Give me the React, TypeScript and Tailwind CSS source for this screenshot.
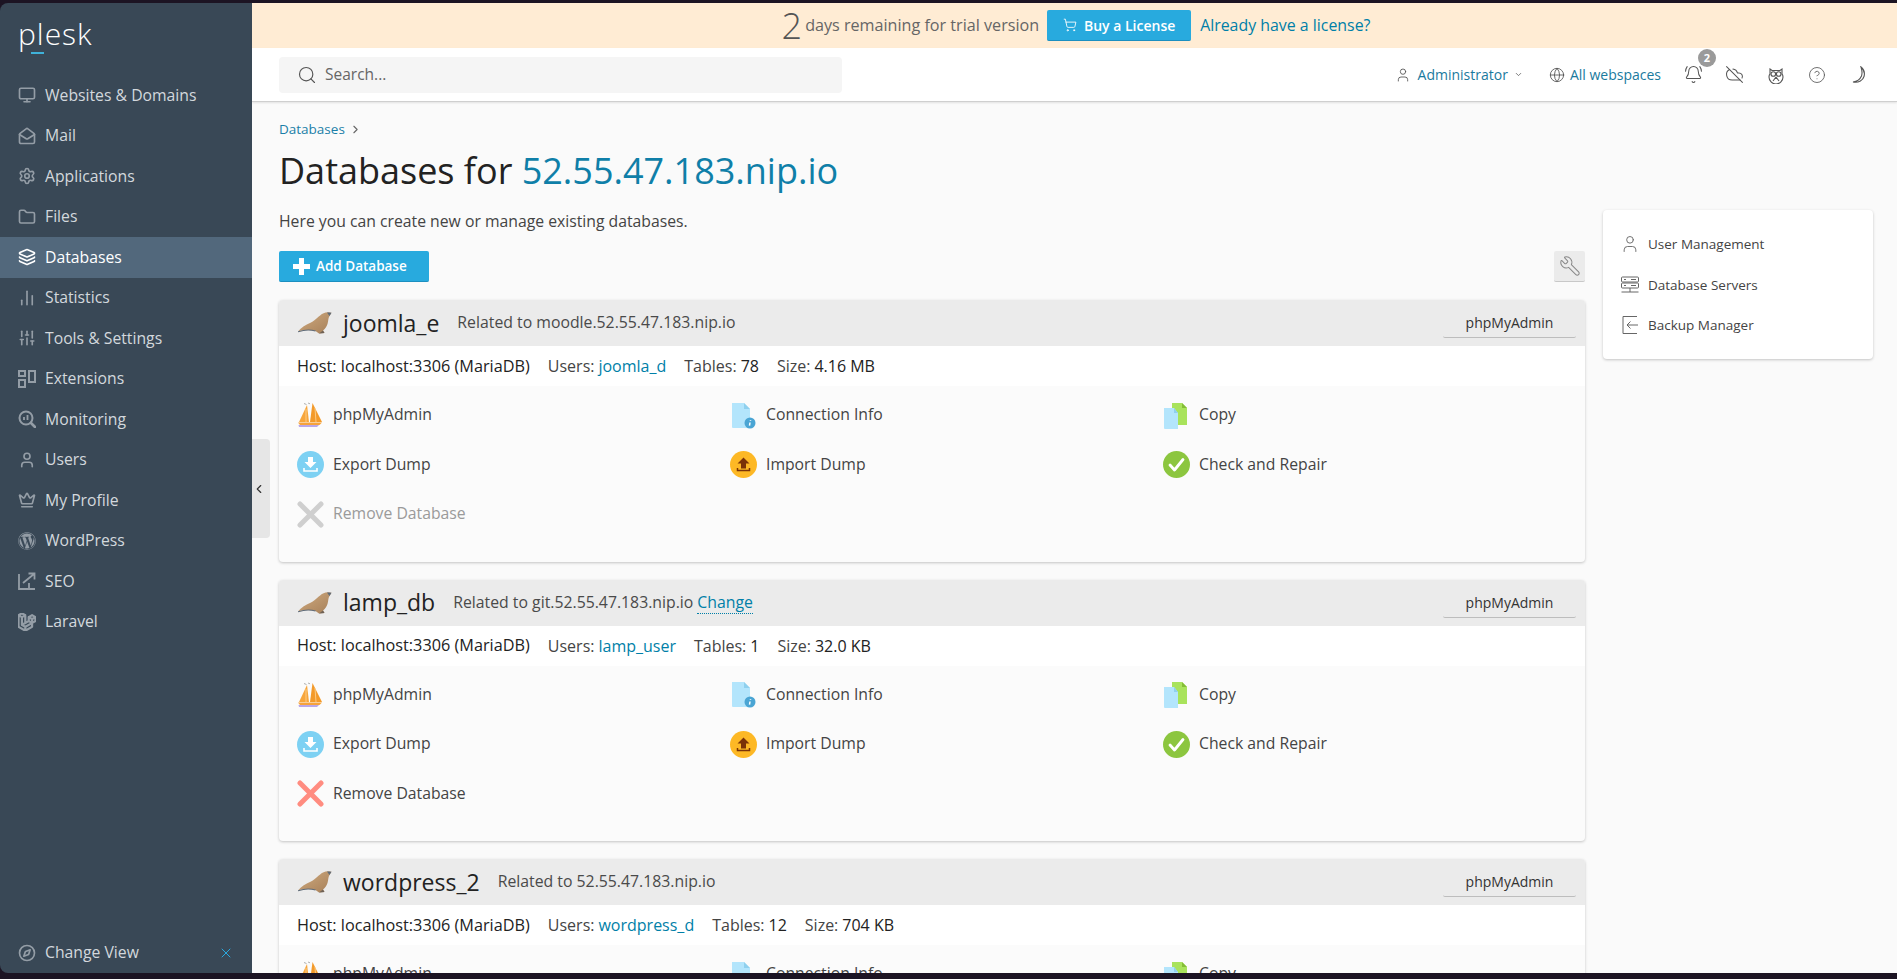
import React from "react";
import {
  Monitor, MailOpen, Settings, Folder, Layers, ChartNoAxesColumn, SlidersVertical, User, Crown,
  Compass, X, ChevronLeft, ChevronRight, ChevronDown, Search, ShoppingCart,
  Globe, BellRing, CloudOff, CircleHelp, Wrench,
} from "lucide-react";
import { FaWordpress } from "react-icons/fa";
import { SiLaravel } from "react-icons/si";

type IconProps = { className?: string; strokeWidth?: number };

const ExtensionsIcon = ({ className }: IconProps) => (
  <svg viewBox="0 0 18 18" className={className} fill="none" stroke="currentColor" strokeWidth="2">
    <rect x="1" y="1" width="6" height="5" />
    <rect x="1" y="10" width="6" height="7" />
    <rect x="11" y="1" width="6" height="11" />
  </svg>
);

const MonitoringIcon = ({ className }: IconProps) => (
  <svg viewBox="0 0 18 18" className={className} fill="none" stroke="currentColor" strokeWidth="2">
    <circle cx="8" cy="8" r="6.500" />
    <path d="M13 13l4 4" strokeWidth="2.600" strokeLinecap="round" />
    <path d="M6 10V7M9.500 10V5" strokeWidth="1.800" />
  </svg>
);

const SeoIcon = ({ className }: IconProps) => (
  <svg viewBox="0 0 18 18" className={className} fill="none" stroke="currentColor" strokeWidth="1.800">
    <path d="M1 2v15h16" />
    <path d="M5 11 16 2M10.500 1.500H16.500V7.500" />
    <path d="M11 16v-5" />
  </svg>
);

const menu = [
  { label: "Websites & Domains", Icon: Monitor },
  { label: "Mail", Icon: MailOpen },
  { label: "Applications", Icon: Settings },
  { label: "Files", Icon: Folder },
  { label: "Databases", Icon: Layers, active: true },
  { label: "Statistics", Icon: ChartNoAxesColumn },
  { label: "Tools & Settings", Icon: SlidersVertical },
  { label: "Extensions", Icon: ExtensionsIcon },
  { label: "Monitoring", Icon: MonitoringIcon },
  { label: "Users", Icon: User },
  { label: "My Profile", Icon: Crown },
  { label: "WordPress", Icon: FaWordpress },
  { label: "SEO", Icon: SeoIcon },
  { label: "Laravel", Icon: SiLaravel },
];

const Seal = () => (
  <svg viewBox="0 0 34 22" className="w-[34px] h-[22px] shrink-0">
    <defs>
      <linearGradient id="sealfill" x1="0" y1="0" x2="1" y2="1">
        <stop offset="0" stopColor="#d0ab80" />
        <stop offset="1" stopColor="#a67f58" />
      </linearGradient>
    </defs>
    <path
      d="M0 19.500C3 15.500 8 12.500 13 10.500 18 8 21 3.500 25 1.500 28 0 31 0 33.500 .8L31.500 4C30 6 30.500 9 29.500 12 28.500 15 27 17 25 18.500L26.500 21 21 21.500 17.500 19C12 17.500 6 17.500 0 19.500z"
      fill="url(#sealfill)"
    />
    <path d="M0 19.800c6-2 12-2.400 17.500-.8" fill="none" stroke="#5f6b78" strokeWidth="1.200" />
    <path d="M29 .6c1.500.1 2.800 0 4.500.2l-2 3.200c-.8-1.200-1.800-2.300-2.500-3.400z" fill="#5f6b78" />
    <path d="M21 21.500l5.500-.5-1.500-2.500" fill="#6f6257" />
  </svg>
);

const Sails = () => (
  <svg viewBox="0 0 26 26" className="w-[26px] h-[26px]">
    <path d="M10 3 2 20h10z" fill="#f7a63c" />
    <path d="M15.500 1 13 20h12z" fill="#f39a2a" />
    <path d="M9 7v13M18 6l1 14" stroke="#fcd08e" strokeWidth=".9" />
    <path d="M1 20.500h24l-2.500 2.500H3z" fill="#f6a33b" />
    <path d="M1.500 23h20.500l-2 2H2z" fill="#b9a7e6" />
    <path d="M7 1.500l2.500 1M11 1l2 .8" stroke="#9a9a9a" strokeWidth=".8" />
  </svg>
);

const ExportIcon = () => (
  <svg viewBox="0 0 27 27" className="w-[27px] h-[27px]">
    <circle cx="13.500" cy="13.500" r="13.500" fill="#7dd1f3" />
    <path d="M11 6h5v5h3.500l-6 6-6-6H11z" fill="#fff" />
    <path d="M7 17v3h13v-3" fill="none" stroke="#fff" strokeWidth="1.600" />
  </svg>
);

const ImportIcon = () => (
  <svg viewBox="0 0 27 27" className="w-[27px] h-[27px]">
    <circle cx="13.500" cy="13.500" r="13.500" fill="#fdb825" />
    <path d="M13.500 6.500l6 6H16v5h-5v-5H7.500z" fill="#7a3207" />
    <path d="M7.500 17v2.500h12V17" fill="none" stroke="#7a3207" strokeWidth="1.500" />
  </svg>
);

const CheckIcon = () => (
  <svg viewBox="0 0 27 27" className="w-[27px] h-[27px]">
    <circle cx="13.500" cy="13.500" r="13.500" fill="#8cc63f" />
    <path d="M7 14l4.500 5L20 8.500" fill="none" stroke="#fff" strokeWidth="2.800" strokeLinecap="round" strokeLinejoin="round" />
  </svg>
);

const InfoDoc = () => (
  <svg viewBox="0 0 27 27" className="w-[27px] h-[27px]">
    <path d="M2 1h12l6 6v19H3a1 1 0 0 1-1-1z" fill="#b3e5fc" />
    <path d="M14 1l6 6h-6z" fill="#8fd0ee" />
    <circle cx="20" cy="21" r="5.500" fill="#4aa5d4" />
    <path d="M20.500 18v.8M20 20.500l-.5 3.200" stroke="#fff" strokeWidth="1.500" />
  </svg>
);

const CopyDoc = () => (
  <svg viewBox="0 0 27 27" className="w-[27px] h-[27px]">
    <path d="M9 1h10l5 5v17H9z" fill="#a9e35b" />
    <path d="M19 1l5 5h-5z" fill="#84bd36" />
    <path d="M1 6h10l4 5v16H2a1 1 0 0 1-1-1z" fill="#b3e5fc" />
    <path d="M11 6l4 5h-4z" fill="#8fd0ee" />
  </svg>
);

const RemoveIcon = ({ disabled }: { disabled?: boolean }) => (
  <svg viewBox="0 0 27 27" className="w-[27px] h-[27px]">
    <path
      d="M3 3l21 21M24 3 3 24"
      stroke={disabled ? "#cfcfcf" : "#ff8c80"}
      strokeWidth="5"
      strokeLinecap="round"
    />
  </svg>
);

const Action = ({ icon, label, muted }: { icon: React.ReactNode; label: string; muted?: boolean }) => (
  <div className="flex items-center h-[27px]">
    <div className="w-[36px] flex items-center shrink-0">{icon}</div>
    <span className={muted ? "text-[#9a9a9a]" : "text-[#444]"}>{label}</span>
  </div>
);

type Db = {
  name: string;
  related: string;
  change?: boolean;
  user: string;
  tables: string;
  size: string;
  disabledRemove?: boolean;
};

const DbCard = ({ db }: { db: Db }) => (
  <div className="rounded-[4px] bg-[#fbfbfb] shadow-[0_1px_3px_rgba(0,0,0,0.22)] overflow-hidden h-[261.500px] shrink-0">
    <div className="h-[46px] bg-[#ebebeb] flex items-center pl-[19px] pr-[9px]">
      <Seal />
      <span className="ml-[11px] text-[23px] text-[#222]">{db.name}</span>
      <span className="ml-[18px] text-[15.800px] text-[#4a4a4a]">
        Related to {db.related}
        {db.change && (
          <a className="ml-[4px] text-[#007fa8] border-b border-dotted border-[#007fa8]">Change</a>
        )}
      </span>
      <button className="ml-auto w-[133px] h-[30px] border-b border-[#bdbdbd] rounded-[2px] text-[14px] text-[#333]">
        phpMyAdmin
      </button>
    </div>
    <div className="h-[40px] bg-white flex items-center pl-[18px] text-[16px] text-[#222]">
      <span className="text-[16.250px] font-medium">Host: localhost:3306 (MariaDB)</span>
      <span className="ml-[18px] text-[#444]">Users:</span>
      <a className="ml-[4px] text-[#007fa8] font-medium">{db.user}</a>
      <span className="ml-[18px] text-[#444]">Tables:</span>
      <span className="ml-[4px] font-medium">{db.tables}</span>
      <span className="ml-[18px] text-[#444]">Size:</span>
      <span className="ml-[4px] font-medium">{db.size}</span>
    </div>
    <div className="grid grid-cols-[433px_433px_1fr] gap-y-[22.500px] pl-[18px] pt-[15.500px] text-[15.750px]">
      <Action icon={<Sails />} label="phpMyAdmin" />
      <Action icon={<InfoDoc />} label="Connection Info" />
      <Action icon={<CopyDoc />} label="Copy" />
      <Action icon={<ExportIcon />} label="Export Dump" />
      <Action icon={<ImportIcon />} label="Import Dump" />
      <Action icon={<CheckIcon />} label="Check and Repair" />
      <Action icon={<RemoveIcon disabled={db.disabledRemove} />} label="Remove Database" muted={db.disabledRemove} />
    </div>
  </div>
);

const dbs: Db[] = [
  { name: "joomla_e", related: "moodle.52.55.47.183.nip.io", user: "joomla_d", tables: "78", size: "4.16 MB", disabledRemove: true },
  { name: "lamp_db", related: "git.52.55.47.183.nip.io", change: true, user: "lamp_user", tables: "1", size: "32.0 KB" },
  { name: "wordpress_2", related: "52.55.47.183.nip.io", user: "wordpress_d", tables: "12", size: "704 KB" },
];

const Sidebar = () => (
  <aside className="w-[252px] shrink-0 bg-[#394856] rounded-l-[8px] flex flex-col">
    <div className="h-[72px] pl-[18px] pt-[11px] relative">
      <span className="block text-[30px] leading-[40px] font-light tracking-[1px] text-white">plesk</span>
      <span className="absolute left-[31px] top-[49px] w-[13px] h-[2px] bg-[#3fb2d9]" />
    </div>
    <nav className="flex flex-col">
      {menu.map(({ label, Icon, active }) => (
        <div
          key={label}
          className={
            active
              ? "h-[40.500px] flex items-center pl-[18px] bg-[#52687c] text-white"
              : "h-[40.500px] flex items-center pl-[18px] text-[#d3d8dd]"
          }
        >
          <Icon className={active ? "w-[18px] h-[18px] text-white" : "w-[18px] h-[18px] text-[#949da6]"} strokeWidth={2.200} />
          <span className="ml-[9px] mt-[1px] text-[15.750px]">{label}</span>
        </div>
      ))}
    </nav>
    <div className="mt-auto h-[40px] flex items-center pl-[18px] pr-[18px] text-[#d3d8dd] text-[15.750px]">
      <Compass className="w-[18px] h-[18px] text-[#949da6]" strokeWidth={2.200} />
      <span className="ml-[9px]">Change View</span>
      <X className="ml-auto w-[16px] h-[16px] text-[#29a9df]" strokeWidth={1.500} />
    </div>
  </aside>
);

const Topbar = () => (
  <>
    <div className="h-[45px] shrink-0 bg-[#ffecd4] flex items-center justify-center pl-[3px] text-[16px]">
      <span className="text-[36px] font-light text-[#555] leading-[45px]">2</span>
      <span className="ml-[3px] text-[16.150px] text-[#666]">days remaining for trial version</span>
      <button className="ml-[8px] h-[31px] w-[144px] bg-[#28aade] border-b border-[#1c8fc0] rounded-[2px] flex items-center justify-center gap-[7px] text-white text-[14px] font-semibold">
        <ShoppingCart className="w-[14px] h-[14px]" strokeWidth={1.500} />
        Buy a License
      </button>
      <a className="ml-[9px] text-[15.900px] text-[#007fa8]">Already have a license?</a>
    </div>
    <header className="h-[54px] shrink-0 bg-white border-b border-[#cfcfcf] shadow-[0_1px_2px_rgba(0,0,0,0.1)] flex items-center pl-[27px] pr-[30px] relative z-10">
      <div className="w-[563px] h-[36px] rounded-[4px] bg-[#f5f5f5] flex items-center pl-[18px] gap-[8px] text-[#666] text-[15.500px]">
        <Search className="w-[20px] h-[20px] text-[#555]" strokeWidth={1.400} />
        Search...
      </div>
      <div className="ml-auto flex items-center text-[14px] font-medium text-[#1a7a9e]">
        <User className="w-[16px] h-[16px] text-[#555]" strokeWidth={1.300} />
        <span className="ml-[7px]">Administrator</span>
        <ChevronDown className="ml-[6px] w-[9px] h-[9px] text-[#555]" />
        <Globe className="ml-[26px] w-[16px] h-[16px] text-[#555]" strokeWidth={1.300} />
        <span className="ml-[5px]">All webspaces</span>
        <div className="ml-[23px] relative">
          <BellRing className="w-[19px] h-[19px] text-[#555]" strokeWidth={1.300} />
          <span className="absolute -top-[16px] left-[14px] w-[18px] h-[18px] rounded-full bg-[#9a9a9a] text-white text-[11px] font-bold flex items-center justify-center">
            2
          </span>
        </div>
        <CloudOff className="ml-[22px] w-[19px] h-[19px] text-[#555]" strokeWidth={1.300} />
        <svg viewBox="0 0 18 18" className="ml-[23px] w-[18px] h-[18px] text-[#555]" fill="none" stroke="currentColor" strokeWidth="1.100">
          <path d="M3 3l2 1.500h8L15 3v5c1 1 1 2 1 3a7 7 0 0 1-14 0c0-1 0-2 1-3z" />
          <circle cx="6.300" cy="8" r="2.300" />
          <circle cx="11.700" cy="8" r="2.300" />
          <path d="M9 11l-3 4M9 11l3 4M9 11v2" />
        </svg>
        <CircleHelp className="ml-[23px] w-[18px] h-[18px] text-[#555]" strokeWidth={1.100} />
        <svg viewBox="0 0 16 18" className="ml-[25px] w-[16px] h-[18px] text-[#555]" fill="none" stroke="currentColor" strokeWidth="1.100">
          <path d="M10 1c3 2.500 4 6 3 9.500C12 14 8 17 2 16c4-.5 7-2.500 8.500-6C11.500 7 11 4 10 1z" />
        </svg>
      </div>
    </header>
  </>
);

const SideLink = ({ icon, label }: { icon: React.ReactNode; label: string }) => (
  <div className="h-[40.500px] flex items-center text-[13.500px] text-[#444]">
    <span className="w-[28px] shrink-0 text-[#666]">{icon}</span>
    {label}
  </div>
);

export default function App() {
  return (
    <div className="h-screen bg-[#1c1423] flex flex-col overflow-hidden font-['Open_Sans',sans-serif]">
      <div className="h-[3px] shrink-0" />
      <div className="flex-1 min-h-0 flex relative">
        <Sidebar />
        <main className="flex-1 min-w-0 flex flex-col bg-[#fafafa] overflow-hidden">
          <Topbar />
          <div className="flex-1 min-h-0 overflow-hidden pl-[27px] pr-[24px] flex gap-[18px]">
            <div className="flex-1 min-w-0 flex flex-col">
              <div className="mt-[20px] h-[14px] flex items-center text-[13.500px] text-[#1a7fa8]">
                Databases
                <ChevronRight className="ml-[4px] w-[13px] h-[13px] text-[#666]" />
              </div>
              <h1 className="mt-[13px] h-[44px] text-[36px] leading-[44px] text-[#222]">
                Databases for <span className="text-[#0f7fa8]">52.55.47.183.nip.io</span>
              </h1>
              <p className="mt-[18px] h-[20px] leading-[20px] text-[15.750px] text-[#444]">
                Here you can create new or manage existing databases.
              </p>
              <div className="mt-[20px] h-[31px] flex items-center justify-between">
                <button className="w-[150px] h-[31px] bg-[#28aade] border-b border-[#1c8fc0] rounded-[2px] flex items-center pl-[14px] gap-[6px] text-white text-[13.500px] font-semibold">
                  <svg viewBox="0 0 17 17" className="w-[17px] h-[17px]">
                    <path d="M6 0h5v6h6v5h-6v6H6v-6H0V6h6z" fill="#fff" />
                  </svg>
                  Add Database
                </button>
                <button className="w-[31px] h-[31px] bg-[#ebebeb] border-b border-[#c8c8c8] rounded-[2px] flex items-center justify-center">
                  <Wrench className="w-[22px] h-[22px] text-[#888] -scale-x-100" strokeWidth={1.100} />
                </button>
              </div>
              <div className="mt-[18px] flex flex-col gap-[18px]">
                {dbs.map((db) => (
                  <DbCard key={db.name} db={db} />
                ))}
              </div>
            </div>
            <div className="w-[270px] shrink-0 mt-[108px] h-[149px] self-start bg-white rounded-[4px] shadow-[0_1px_3px_rgba(0,0,0,0.22)] px-[17px] py-[14px]">
              <SideLink icon={<User className="w-[20px] h-[20px]" strokeWidth={1.100} />} label="User Management" />
              <SideLink
                icon={
                  <svg viewBox="0 0 20 20" className="w-[20px] h-[20px]" fill="none" stroke="currentColor" strokeWidth="1">
                    <rect x="1.500" y="2" width="17" height="5" rx="1" />
                    <rect x="1.500" y="8" width="17" height="5" rx="1" />
                    <path d="M10 13v4M1.500 17h17M4 4.500h2M4 10.500h2M11 4.500h5M11 10.500h5" />
                  </svg>
                }
                label="Database Servers"
              />
              <SideLink
                icon={
                  <svg viewBox="0 0 20 20" className="w-[20px] h-[20px]" fill="none" stroke="currentColor" strokeWidth="1">
                    <path d="M17 1.500H3v17h14M18 10H7M10.500 6.500 7 10l3.500 3.500" />
                  </svg>
                }
                label="Backup Manager"
              />
            </div>
          </div>
        </main>
        <div className="absolute left-[252px] top-[436px] w-[18px] h-[99px] bg-[#e6e6e6] rounded-r-[4px] flex items-center justify-center pr-[4px]">
          <ChevronLeft className="w-[14px] h-[14px] text-[#333]" strokeWidth={2} />
        </div>
      </div>
      <div className="h-[6px] shrink-0" />
    </div>
  );
}
